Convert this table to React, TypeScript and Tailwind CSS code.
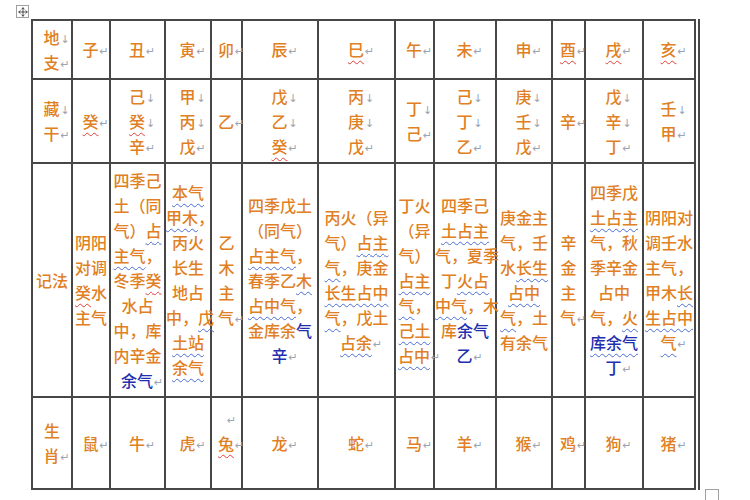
import { Move } from "lucide-react";

// column widths measured between grid lines
const COLS = [40, 38, 55, 46, 31, 76, 77, 39, 62, 56, 33, 58, 54];

// markup: {r:x} red wavy, {b:x} blue wavy, {B:x} blue text + blue wavy, <x> blue text, ^ line break mark, $ paragraph mark
const ROWS: { h: string; cells: string[][] }[] = [
  {
    h: "h-[59px]",
    cells: [
      ["地^", "支$"],
      ["子$"],
      ["丑$"],
      ["寅$"],
      ["卯$"],
      ["辰$"],
      ["{r:巳}$"],
      ["午$"],
      ["未$"],
      ["申$"],
      ["{r:酉}$"],
      ["{r:戌}$"],
      ["{r:亥}$"],
    ],
  },
  {
    h: "h-[84px]",
    cells: [
      ["藏^", "干$"],
      ["{r:癸}$"],
      ["己^", "{r:癸}^", "辛$"],
      ["甲^", "丙^", "戊$"],
      ["乙$"],
      ["戊^", "乙^", "{r:癸}$"],
      ["丙^", "庚^", "戊$"],
      ["丁^", "己$"],
      ["己^", "丁^", "乙$"],
      ["庚^", "壬^", "戊$"],
      ["辛$"],
      ["戊^", "辛^", "丁$"],
      ["壬^", "甲$"],
    ],
  },
  {
    h: "h-[234px]",
    cells: [
      ["记法"],
      ["阴阳", "对调", "{r:癸}水", "主气"],
      ["四季己", "土（同", "气）{b:占}", "{b:主气}，", "冬季{r:癸}", "水占", "中，库", "内辛金", "<余气>$"],
      ["{b:本气}", "{b:甲木}，", "丙火", "长生", "地占", "中，{b:戊}", "{b:土站}", "{b:余气}"],
      ["乙", "木", "主", "气$"],
      ["四季戊土", "（同气）", "{b:占主气}，", "春季乙{b:木}", "{b:占中气}，", "金库余<气>", "<辛>$"],
      ["丙火（异", "气）{b:占主}", "{b:气}，庚金", "{b:长生占中}", "{b:气}，戊土", "{b:占余}$"],
      ["丁火", "（异", "气）", "{b:占主}", "{b:气}，", "{b:己土}", "{b:占中}$"],
      ["四季己", "{b:土占主}", "气，夏季", "丁{b:火占}", "{b:中气}，木", "库<余气>", "<乙>$"],
      ["庚金主", "气，壬", "水{b:长生}", "{b:占中}", "{b:气}，土", "有余气"],
      ["辛", "金", "主", "气$"],
      ["四季戊", "{b:土占主}", "气，秋", "季辛金", "占中", "气，{b:火}", "{B:库余气}", "<丁>$"],
      ["阴阳对", "调壬水", "主气，", "甲木{b:长}", "{b:生占中}", "{b:气}$"],
    ],
  },
  {
    h: "h-[92px]",
    cells: [
      ["生", "肖$"],
      ["鼠$"],
      ["牛$"],
      ["虎$"],
      ["$", "{r:兔}$", ""],
      ["龙$"],
      ["蛇$"],
      ["马$"],
      ["羊$"],
      ["猴$"],
      ["鸡$"],
      ["狗$"],
      ["猪$"],
    ],
  },
];

const markClass =
  "relative -top-[1px] inline-block w-0 whitespace-nowrap pl-[1px] font-['DejaVu_Sans',sans-serif] text-[11px] text-[#9aa4b2]";
const redWavy = "underline decoration-wavy decoration-[#e0403a] decoration-1 underline-offset-[4px]";
const blueWavy = "underline decoration-wavy decoration-[#4a6cd4] decoration-1 underline-offset-[4px]";

function Line({ src }: { src: string }) {
  const re = /\{([rbB]):([^}]*)\}|<([^>]*)>|(\^)|(\$)|([^{<^$]+)/g;
  const parts: React.ReactNode[] = [];
  let m: RegExpExecArray | null;
  let i = 0;
  while ((m = re.exec(src))) {
    const k = i++;
    if (m[1] === "r") parts.push(<span key={k} className={redWavy}>{m[2]}</span>);
    else if (m[1] === "b") parts.push(<span key={k} className={blueWavy}>{m[2]}</span>);
    else if (m[1] === "B")
      parts.push(<span key={k} className={`${blueWavy} text-[#1f2fb0]`}>{m[2]}</span>);
    else if (m[3] !== undefined) parts.push(<span key={k} className="text-[#1f2fb0]">{m[3]}</span>);
    else if (m[4]) parts.push(<span key={k} className={markClass}>↓</span>);
    else if (m[5]) parts.push(<span key={k} className={markClass}>↵</span>);
    else parts.push(<span key={k}>{m[6]}</span>);
  }
  return <div className="h-[25px] whitespace-nowrap leading-[25px]">{parts}</div>;
}

export default function App() {
  return (
    <div className="h-[500px] w-[750px] overflow-hidden bg-white pl-[31px] pt-[19px] font-['Noto_Sans_CJK_SC',sans-serif] text-[16px] font-medium text-[#e07f24]">
      <div className="relative w-[669px]">
        {/* table move handle */}
        <div className="absolute -left-[15px] -top-[14px] flex h-[13px] w-[13px] items-center justify-center border border-[#a0a0a0] bg-white text-[#333]">
          <Move size={10} strokeWidth={2} />
        </div>
        <table className="w-[668px] table-fixed border-collapse">
          <colgroup>
            {COLS.map((w, i) => (
              <col key={i} style={{ width: w }} />
            ))}
          </colgroup>
          <tbody>
            {ROWS.map((row, r) => (
              <tr key={r} className={row.h}>
                {row.cells.map((lines, c) => (
                  <td
                    key={c}
                    className={`overflow-visible border-2 border-[#474747] p-0 text-center align-middle ${
                      c === COLS.length - 1 ? "border-r-[6px] border-double border-r-[#474747]" : ""
                    }`}
                  >
                    {lines.map((l, j) => (
                      <Line key={j} src={l} />
                    ))}
                  </td>
                ))}
              </tr>
            ))}
          </tbody>
        </table>
        {/* table resize handle */}
        <div className="absolute -bottom-[13px] right-[-19px] h-[14px] w-[14px] border border-[#a0a0a0] bg-white" />
      </div>
    </div>
  );
}
